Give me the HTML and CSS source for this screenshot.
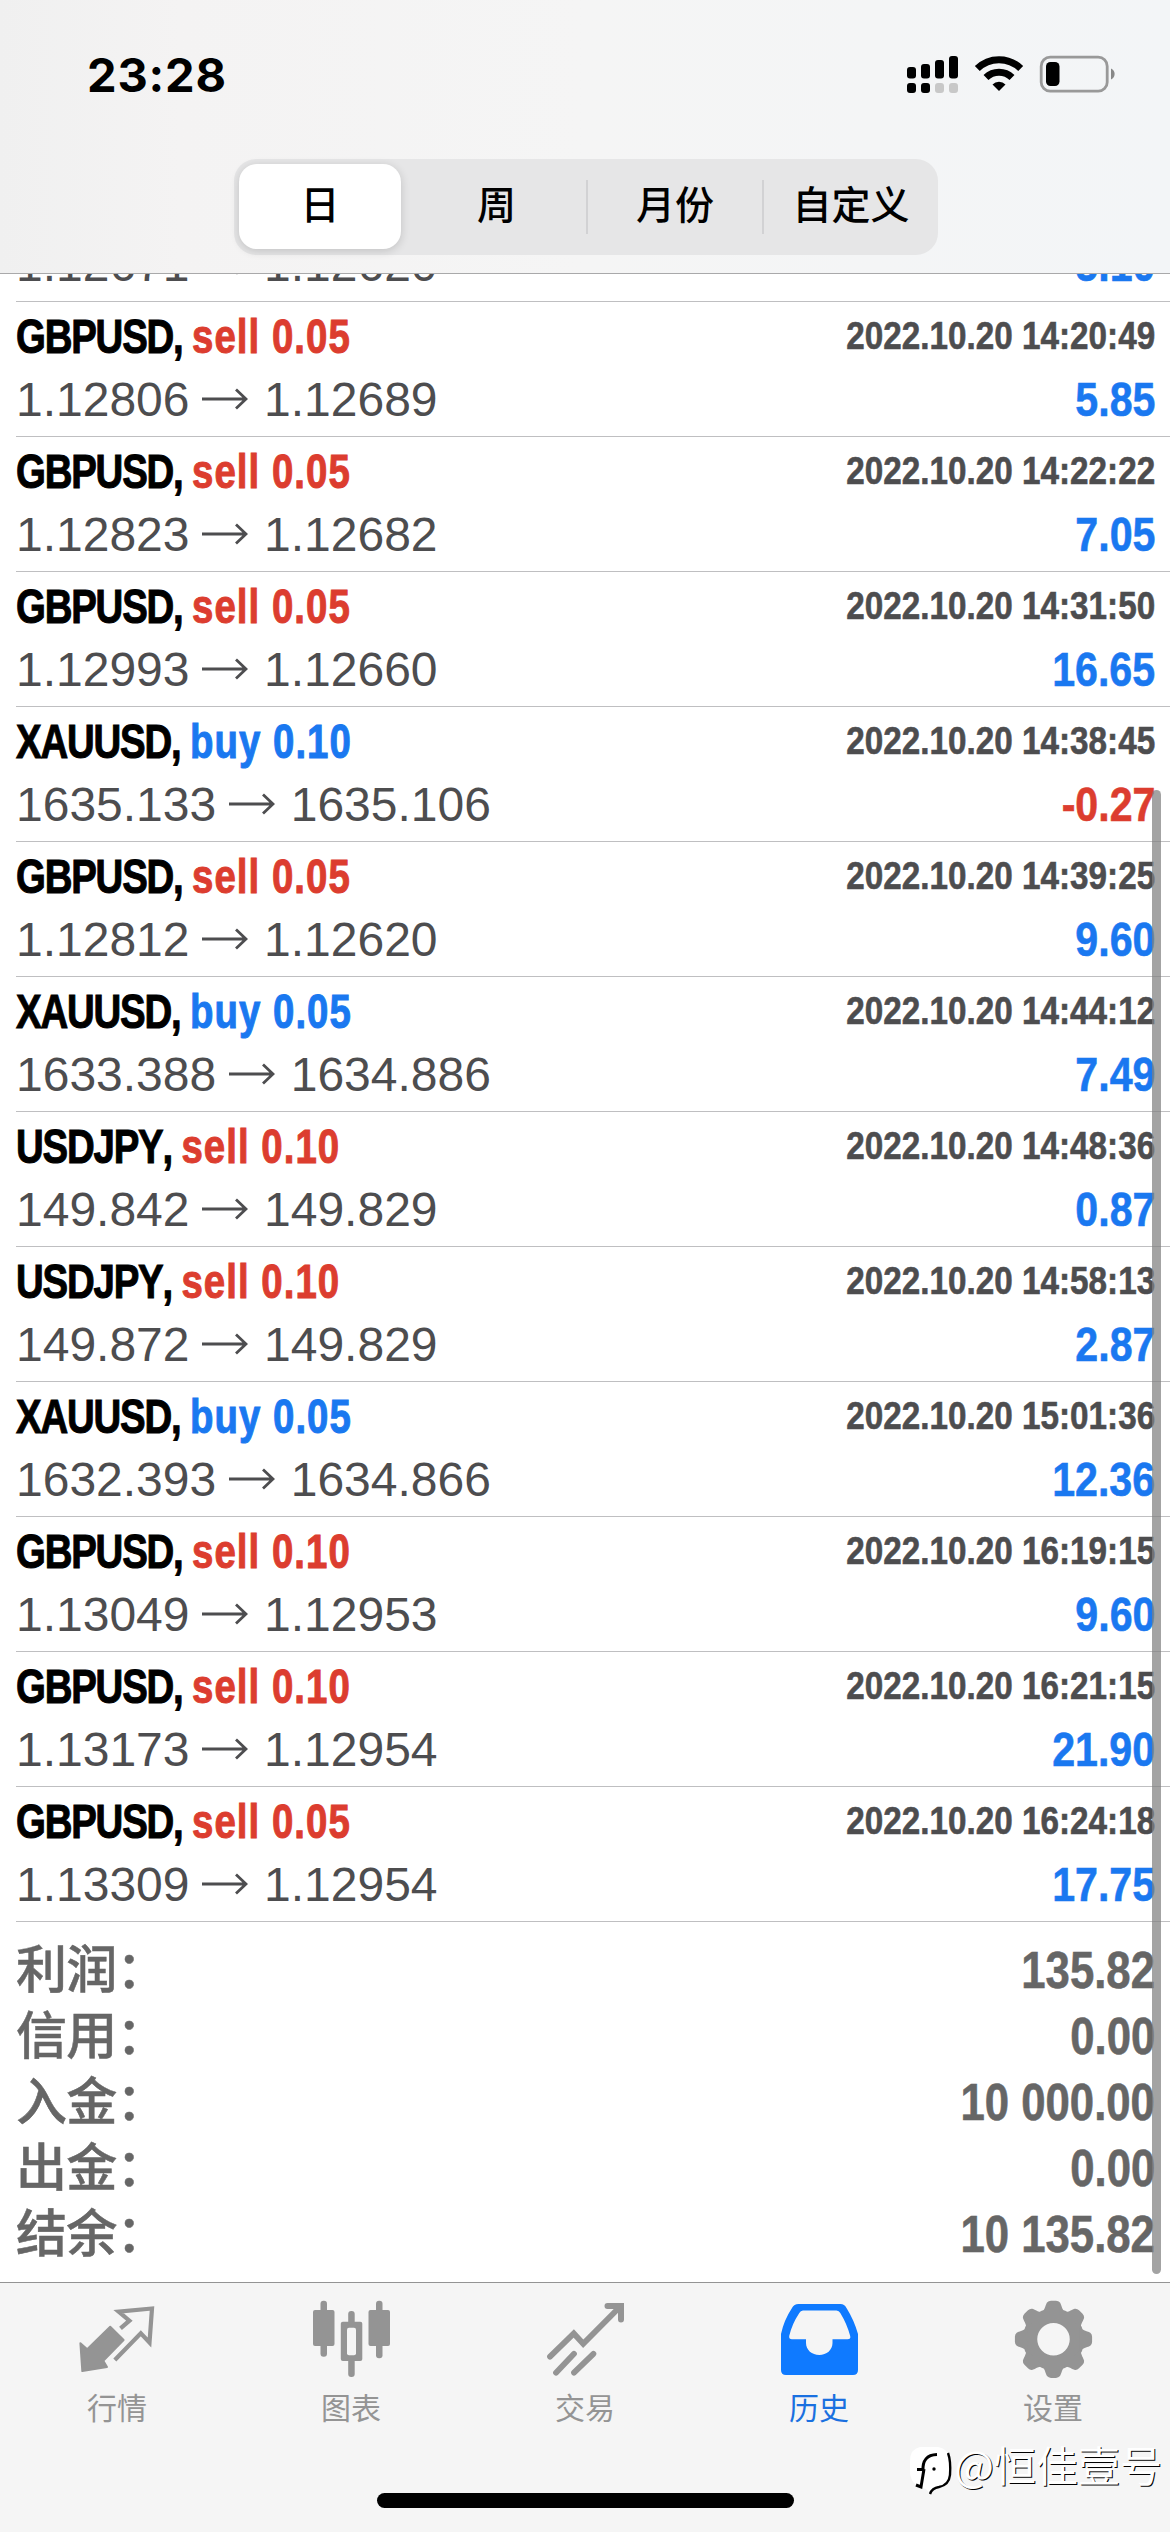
FILE: index.html
```html
<!DOCTYPE html>
<html lang="zh-CN">
<head>
<meta charset="utf-8">
<title>历史</title>
<link rel="stylesheet" href="styles.css">
</head>
<body>
<div class="screen">
  <header class="header">
    <div class="status">
      <time class="clock">23:28</time>
      <svg class="status-icons" width="210" height="40" viewBox="906 54 210 40">
        <g fill="#000">
          <rect x="907" y="67" width="9" height="11.500" rx="3"/>
          <rect x="921" y="64" width="9" height="14.500" rx="3"/>
          <rect x="935" y="60" width="9" height="18.500" rx="3"/>
          <rect x="949" y="56" width="9" height="22.500" rx="3"/>
          <rect x="907" y="83" width="9" height="10" rx="3"/>
          <rect x="921" y="83" width="9" height="10" rx="3"/>
        </g>
        <g fill="#c8c8c8">
          <rect x="935" y="83" width="9" height="10" rx="3"/>
          <rect x="949" y="83" width="9" height="10" rx="3"/>
        </g>
        <g fill="none" stroke="#000" stroke-width="7">
          <path d="M977.300 68.500a31 31 0 0 1 43.400 0"/>
          <path d="M986 77.500a18.500 18.500 0 0 1 26 0"/>
        </g>
        <path d="M992.500 84.500a9 9 0 0 1 13 0L999 91z"/>
        <rect x="1041.200" y="57.200" width="66" height="34" rx="9" fill="none" stroke="#999" stroke-width="2.800"/>
        <rect x="1046" y="62" width="13.500" height="24" rx="4.500"/>
        <path d="M1111 68.500a6 6 0 0 1 0 11z" fill="#888"/>
      </svg>
    </div>
    <nav class="segments">
      <span class="segment active">日</span>
      <span class="segment">周</span>
      <span class="segment">月份</span>
      <span class="segment">自定义</span>
    </nav>
  </header>

  <svg class="defs" width="0" height="0">
    <symbol id="arrow" viewBox="0 0 46 24"><path d="M0 12h44M34 2.500L44 12L34 21.500" fill="none" stroke="#4d4d4f" stroke-width="2.800"/></symbol>
  </svg>

  <main class="history">
    <div class="deal"><div class="line"><b class="name">GBPUSD, <i class="sell">sell 0.10</i></b><b class="date">2022.10.20 14:18:20</b></div><div class="line"><span class="price">1.12671<svg class="arrow"><use href="#arrow"/></svg>1.12620</span><b class="profit">5.10</b></div></div>
    <div class="deal"><div class="line"><b class="name">GBPUSD, <i class="sell">sell 0.05</i></b><b class="date">2022.10.20 14:20:49</b></div><div class="line"><span class="price">1.12806<svg class="arrow"><use href="#arrow"/></svg>1.12689</span><b class="profit">5.85</b></div></div>
    <div class="deal"><div class="line"><b class="name">GBPUSD, <i class="sell">sell 0.05</i></b><b class="date">2022.10.20 14:22:22</b></div><div class="line"><span class="price">1.12823<svg class="arrow"><use href="#arrow"/></svg>1.12682</span><b class="profit">7.05</b></div></div>
    <div class="deal"><div class="line"><b class="name">GBPUSD, <i class="sell">sell 0.05</i></b><b class="date">2022.10.20 14:31:50</b></div><div class="line"><span class="price">1.12993<svg class="arrow"><use href="#arrow"/></svg>1.12660</span><b class="profit">16.65</b></div></div>
    <div class="deal"><div class="line"><b class="name">XAUUSD, <i class="buy">buy 0.10</i></b><b class="date">2022.10.20 14:38:45</b></div><div class="line"><span class="price">1635.133<svg class="arrow"><use href="#arrow"/></svg>1635.106</span><b class="profit loss">-0.27</b></div></div>
    <div class="deal"><div class="line"><b class="name">GBPUSD, <i class="sell">sell 0.05</i></b><b class="date">2022.10.20 14:39:25</b></div><div class="line"><span class="price">1.12812<svg class="arrow"><use href="#arrow"/></svg>1.12620</span><b class="profit">9.60</b></div></div>
    <div class="deal"><div class="line"><b class="name">XAUUSD, <i class="buy">buy 0.05</i></b><b class="date">2022.10.20 14:44:12</b></div><div class="line"><span class="price">1633.388<svg class="arrow"><use href="#arrow"/></svg>1634.886</span><b class="profit">7.49</b></div></div>
    <div class="deal"><div class="line"><b class="name">USDJPY, <i class="sell">sell 0.10</i></b><b class="date">2022.10.20 14:48:36</b></div><div class="line"><span class="price">149.842<svg class="arrow"><use href="#arrow"/></svg>149.829</span><b class="profit">0.87</b></div></div>
    <div class="deal"><div class="line"><b class="name">USDJPY, <i class="sell">sell 0.10</i></b><b class="date">2022.10.20 14:58:13</b></div><div class="line"><span class="price">149.872<svg class="arrow"><use href="#arrow"/></svg>149.829</span><b class="profit">2.87</b></div></div>
    <div class="deal"><div class="line"><b class="name">XAUUSD, <i class="buy">buy 0.05</i></b><b class="date">2022.10.20 15:01:36</b></div><div class="line"><span class="price">1632.393<svg class="arrow"><use href="#arrow"/></svg>1634.866</span><b class="profit">12.36</b></div></div>
    <div class="deal"><div class="line"><b class="name">GBPUSD, <i class="sell">sell 0.10</i></b><b class="date">2022.10.20 16:19:15</b></div><div class="line"><span class="price">1.13049<svg class="arrow"><use href="#arrow"/></svg>1.12953</span><b class="profit">9.60</b></div></div>
    <div class="deal"><div class="line"><b class="name">GBPUSD, <i class="sell">sell 0.10</i></b><b class="date">2022.10.20 16:21:15</b></div><div class="line"><span class="price">1.13173<svg class="arrow"><use href="#arrow"/></svg>1.12954</span><b class="profit">21.90</b></div></div>
    <div class="deal"><div class="line"><b class="name">GBPUSD, <i class="sell">sell 0.05</i></b><b class="date">2022.10.20 16:24:18</b></div><div class="line"><span class="price">1.13309<svg class="arrow"><use href="#arrow"/></svg>1.12954</span><b class="profit">17.75</b></div></div>

    <dl class="summary">
      <div class="total"><dt>利润：</dt><dd>135.82</dd></div>
      <div class="total"><dt>信用：</dt><dd>0.00</dd></div>
      <div class="total"><dt>入金：</dt><dd>10 000.00</dd></div>
      <div class="total"><dt>出金：</dt><dd>0.00</dd></div>
      <div class="total"><dt>结余：</dt><dd>10 135.82</dd></div>
    </dl>
    <div class="scrollbar"></div>
  </main>

  <footer class="tabbar">
    <nav class="tabs">
      <div class="tab">
        <svg class="icon" viewBox="0 0 90 90">
          <path d="M38.200 30.700L51.600 44L31.300 64.700L35 71L10.300 75L8.400 47.300L15.200 53.300z" fill="#949494" stroke="#949494" stroke-width="2" stroke-linejoin="round"/>
          <path d="M48.500 32.300L57.400 24.700L46.600 15.700L80 12.500L77.500 46.500L68.800 37.300L42.800 64" fill="none" stroke="#949494" stroke-width="4.200"/>
        </svg>
        <span>行情</span>
      </div>
      <div class="tab">
        <svg class="icon" viewBox="0 0 90 90" fill="#949494">
          <rect x="7" y="14" width="21.500" height="36" rx="2"/><rect x="14.500" y="4.700" width="6.500" height="56" rx="3"/>
          <rect x="62.500" y="14" width="21.500" height="36" rx="2"/><rect x="70" y="4.700" width="6.500" height="57.500" rx="3"/>
          <rect x="42.200" y="15" width="6.500" height="66" rx="3"/><rect x="34.800" y="25.700" width="21.500" height="39.300" rx="2"/>
          <rect x="41" y="31.700" width="9" height="27.500" rx="2" fill="#f5f5f5"/>
        </svg>
        <span>图表</span>
      </div>
      <div class="tab">
        <svg class="icon" viewBox="0 0 90 90" fill="none" stroke="#949494" stroke-width="5.800" stroke-linecap="round">
          <path d="M10 60.700L33.800 37.500L43.200 47.700L80 10.700"/><path d="M67.500 10H81V23.500" stroke-width="6"/>
          <path d="M16 76.700L34 57.800M34 76.700L53.400 57.800"/>
        </svg>
        <span>交易</span>
      </div>
      <div class="tab active">
        <svg class="icon" viewBox="0 0 90 90">
          <path fill="#0f7aff" fill-rule="evenodd" d="M24.500 8H66.500Q70.500 8 72.500 12Q80 24 84 38V74Q84 79 79 79H12Q7 79 7 74V38Q10 24 18 12Q20 8 24.500 8zM29 14.500Q26.500 14.500 25.300 17Q18 28 15.200 40Q14.800 43.300 18 43.300H32V47C32 54 38 59 45.300 59S58.500 54 58.500 47V43.300H73.500Q77 43.300 76.200 40Q73 28 66.300 17Q65 14.500 62.500 14.500z"/>
        </svg>
        <span>历史</span>
      </div>
      <div class="tab">
        <svg class="icon" viewBox="0 0 90 90" fill="#949494">
          <defs><path id="tooth" d="M34 17C37.500 12 37.500 9 39 6.500Q40.500 4.700 43 4.700H48Q50.500 4.700 52 6.500C53.500 9 53.500 12 57 17z"/></defs>
          <circle cx="45.500" cy="43.300" r="23.500" fill="none" stroke="#949494" stroke-width="14.500"/>
          <use href="#tooth"/><use href="#tooth" transform="rotate(45 45.500 43.300)"/><use href="#tooth" transform="rotate(90 45.500 43.300)"/><use href="#tooth" transform="rotate(135 45.500 43.300)"/>
          <use href="#tooth" transform="rotate(180 45.500 43.300)"/><use href="#tooth" transform="rotate(225 45.500 43.300)"/><use href="#tooth" transform="rotate(270 45.500 43.300)"/><use href="#tooth" transform="rotate(315 45.500 43.300)"/>
        </svg>
        <span>设置</span>
      </div>
    </nav>
    <div class="home-indicator"></div>
    <div class="watermark">
      <svg width="46" height="52" viewBox="0 0 46 52">
        <path d="M12 2H30Q42 4 42 18V30Q41 42 28 43L22 49L18 44Q2 41 2 26V16Q2 4 12 2z" fill="#fff"/>
        <path d="M9 24.500H16M15 26Q14 10 29 9.500M16 24L13 42L8 40" fill="none" stroke="#000" stroke-width="3"/>
        <path d="M40 8Q43 16 42 30Q41 40 31 42Q24 43 22 49" fill="none" stroke="#000" stroke-width="2.400"/>
        <circle cx="26" cy="24" r="1.700"/>
      </svg>
      <span>@恒佳壹号</span>
    </div>
  </footer>
</div>
</body>
</html>
```
FILE: styles.css
```css
* { box-sizing: border-box; }

body {
  margin: 0;
  background: #fff;
  font-family: "Liberation Sans", "Noto Sans CJK SC", sans-serif;
}

.screen {
  position: relative;
  display: flex;
  flex-direction: column;
  width: 1170px;
  height: 2532px;
  overflow: hidden;
}

.defs { position: absolute; }

/* Header */
.header {
  flex: none;
  height: 274px;
  padding-top: 54px;
  border-bottom: 1px solid #a9a9aa;
  background: linear-gradient(90deg, #f0f0f0 0, #f4f3f3 180px, #f5f5f5 50%, #f3f5f7 100%);
}

.status {
  display: flex;
  justify-content: space-between;
  height: 105px;
  padding: 0 54px 0 87px;
}

.clock {
  font: 700 47px/42px "Inter", sans-serif;
  letter-spacing: .8px;
}

.segments {
  display: grid;
  grid-template-columns: repeat(4, 176px);
  width: 704px;
  height: 96px;
  margin-left: 234px;
  border-radius: 22px;
  background: #e6e6e7;
}

.segment {
  display: flex;
  align-items: center;
  justify-content: center;
  margin: 21px 0;
  padding: 0 0 9px;
  border-left: 2px solid #d2d2d4;
  font: 500 39px/45px "Noto Sans CJK SC", sans-serif;
}

.segment.active {
  margin: 5px 9px 6px 5px;
  border: 0;
  border-radius: 18px;
  background: #fff;
  box-shadow: 0 2px 10px rgba(0, 0, 0, .16);
}

.segment.active + .segment {
  padding-right: 5px;
  border-color: transparent;
}

/* Deals */
.history {
  position: relative;
  flex: none;
  height: 2008px;
  overflow: hidden;
}

.deal {
  height: 135px;
  margin-left: 16px;
  padding: 5px 15px 0 0;
  border-bottom: 1px solid #bfbfc1;
}

.deal:first-child { margin-top: -107px; }

.line {
  display: flex;
  justify-content: space-between;
  height: 60px;
  line-height: 60px;
  white-space: nowrap;
}

.line + .line {
  height: 66px;
  line-height: 66px;
}

/* Condensed bold face */
.name, .date, .profit, dd {
  transform: scaleX(.857);
  transform-origin: right;
  -webkit-text-stroke: .6px currentColor;
}

.name {
  font-size: 48px;
  font-kerning: none;
  letter-spacing: -1.500px;
  transform: scaleX(.8);
  transform-origin: left;
  -webkit-text-stroke-width: 1px;
}

.name i {
  font-style: normal;
  letter-spacing: 1.300px;
}

.sell, .profit.loss { color: #dc3d2f; }
.buy, .profit { color: #1a78f0; }

.date {
  color: #4d4d4f;
  font-size: 39px;
  line-height: 58px;
  transform: scaleX(.853);
}

.price {
  color: #4d4d4f;
  font-size: 48px;
}

.arrow {
  width: 46px;
  height: 24px;
  margin: 0 16px 0 12.500px;
  vertical-align: 5px;
}

.profit { font-size: 48px; }

/* Totals */
.summary {
  margin: 0;
  padding: 11px 15px 0 16px;
}

.total {
  display: flex;
  justify-content: space-between;
  height: 66px;
  color: #666;
  font-size: 51px;
  line-height: 66px;
}

dt {
  font: 500 51px/66px "Noto Sans CJK SC", sans-serif;
  letter-spacing: -.8px;
  -webkit-text-stroke: .5px currentColor;
}

dd {
  margin: 0;
  padding-top: 5px;
  font-weight: 700;
}

.scrollbar {
  position: absolute;
  top: 516px;
  right: 9px;
  width: 9px;
  height: 1484px;
  border-radius: 5px;
  background: rgba(128, 128, 128, .72);
}

/* Tab bar */
.tabbar {
  position: relative;
  flex: 1;
  border-top: 1px solid #949494;
  background: #f5f5f5;
}

.tabs {
  display: grid;
  grid-template-columns: repeat(5, 1fr);
  height: 210px;
  padding-top: 13px;
}

.tab {
  display: flex;
  flex-direction: column;
  align-items: center;
  color: #949494;
  font: 400 30px/40px "Noto Sans CJK SC", sans-serif;
}

.tab.active { color: #1a70e0; }

.icon {
  width: 90px;
  height: 90px;
}

.home-indicator {
  width: 417px;
  height: 15px;
  margin: 0 auto;
  border-radius: 8px;
  background: #000;
}

.watermark {
  position: absolute;
  top: 162px;
  right: 8px;
  display: flex;
  color: #fff;
  font: 400 42px/38px "Noto Sans CJK SC", sans-serif;
  text-shadow: 1px 1px 0 #000;
  white-space: nowrap;
}
```
